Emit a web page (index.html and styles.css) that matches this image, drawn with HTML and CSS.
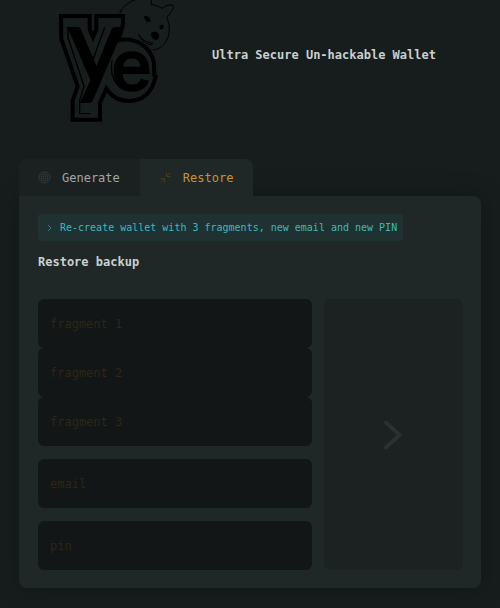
FILE: index.html
```html
<!DOCTYPE html>
<html lang="en">
<head>
<meta charset="utf-8">
<meta name="viewport" content="width=device-width, initial-scale=1">
<title>Ultra Secure Un-hackable Wallet</title>
<link rel="stylesheet" href="styles.css">
</head>
<body>
<header class="header">
  <svg class="logo" viewBox="0 0 405 390" role="img" aria-label="Ye">
    <g class="logo-line">
      <path d="M209 40C218 18 240 2 268-4C280-8 294-6 303-2L304 14C318 15 327 20 337 25C344 18 354 14 369 15C374 24 364 36 350 52C362 78 361 108 344 130C333 144 320 150 308 149"/>
      <path d="M266 104C277 121 290 127 307 129L306 134C288 135 273 121 266 104Z"/>
    </g>
    <path d="M283 48C292 46 301 53 302 63C295 71 284 65 283 48ZM328 78C334 71 341 72 342 79C340 88 334 89 329 86ZM304 98C315 92 327 98 328 108C328 117 321 121 316 119C306 117 302 108 304 98Z"/>
    <path class="logo-contour" d="M33 48H119V88L129 112L139 88V48H219V72L206 121C255 111 302 138 312 189L313 226L317 229C307 276 280 302 237 303C207 303 184 289 169 266L150 308V359H68V302L83 259L34 117Z"/>
    <path class="logo-inline" d="M54 80V112L102 259L89 300V341H120M164 82L130 177M186 180C176 248 212 277 255 262"/>
    <text><tspan class="logo-y" x="53" y="250">y</tspan><tspan class="logo-e" x="186" y="271">e</tspan></text>
  </svg>
  <h1 class="title">Ultra Secure Un-hackable Wallet</h1>
</header>
<main class="wallet">
  <nav class="tabs" aria-label="Wallet">
    <button class="tab" type="button">
      <svg class="tab-icon" viewBox="0 0 13 13" aria-hidden="true"><circle cx="6.5" cy="6.5" r="5.5"/><circle cx="6.5" cy="6.5" r="3.5"/><circle cx="6.5" cy="6.5" r="1.5"/></svg>
      Generate
    </button>
    <button class="tab tab-active" type="button" aria-current="page">
      <svg class="tab-icon" viewBox="0 0 13 13" aria-hidden="true"><path d="M1.5 11.5L5 8M1.5 7.5H5.5V11.5M11 2L7.500 5.500M7.500 1.500V5.500H11.500"/></svg>
      Restore
    </button>
  </nav>
  <section class="panel">
    <p class="note">
      <svg class="note-icon" viewBox="0 0 6 8" aria-hidden="true"><path d="M1 1L4 4L1 7"/></svg>
      Re-create wallet with 3 fragments, new email and new PIN
    </p>
    <h2 class="heading">Restore backup</h2>
    <form class="form">
      <div class="fields">
        <div class="fragments">
          <input class="field" type="text" aria-label="fragment 1" placeholder="fragment 1">
          <input class="field" type="text" aria-label="fragment 2" placeholder="fragment 2">
          <input class="field" type="text" aria-label="fragment 3" placeholder="fragment 3">
        </div>
        <input class="field" type="email" aria-label="email" placeholder="email">
        <input class="field" type="password" aria-label="pin" placeholder="pin">
      </div>
      <button class="submit" type="submit" aria-label="Restore wallet">
        <svg class="submit-icon" viewBox="0 0 18 30" aria-hidden="true"><path d="M2 2.5L15.5 15L2 27.5"/></svg>
      </button>
    </form>
  </section>
</main>
</body>
</html>
```
FILE: styles.css
```css
* {
  box-sizing: border-box;
}

body {
  margin: 0;
  background: #171d1c;
  color: #c8d0d0;
  font: 12px/18px "DejaVu Sans Mono", monospace;
}

.header {
  display: grid;
  grid-template-columns: 135px 1fr;
  column-gap: 27px;
  padding: 0 50px;
}

.logo {
  width: 135px;
  height: 130px;
}

.logo-line {
  fill: none;
  stroke: #000;
  stroke-width: 3;
}

.logo-contour {
  fill: #171d1c;
  stroke: #000;
  stroke-width: 12;
}

.logo-inline {
  fill: none;
  stroke: #000;
  stroke-width: 4;
}

.logo-y {
  font: 325px/1 Lato, sans-serif;
  stroke: #000;
  stroke-width: 6;
}

.logo-e {
  font: 212px/1 "Liberation Sans", sans-serif;
  stroke: #000;
  stroke-width: 8;
}

.title {
  margin: 46px 0 0;
  font-size: 12px;
  line-height: 18px;
  white-space: nowrap;
}

.wallet {
  padding: 29px 19px 19px;
}

.tabs {
  display: flex;
}

.tab {
  display: flex;
  align-items: center;
  gap: 11px;
  height: 37px;
  padding: 0 20px 0 19px;
  border: 0;
  border-radius: 8px 0 0 0;
  background: #1b2120;
  color: #a0a7a6;
  font: inherit;
}

.tab-active {
  border-radius: 0 8px 0 0;
  background: #202827;
  color: #c9942b;
}

.tab-icon {
  width: 13px;
  height: 13px;
  fill: none;
  stroke: #343c3b;
}

.tab-active .tab-icon {
  stroke: #443a22;
}

.panel {
  padding: 18px 18px 18px 19px;
  border-radius: 0 8px 8px 8px;
  background: #202827;
  box-shadow: 0 0 24px rgba(0, 0, 0, 0.25);
}

.note {
  display: flex;
  align-items: center;
  gap: 7px;
  width: fit-content;
  margin: 0;
  padding: 5px 6px 4px 9px;
  border-radius: 3px;
  background: #203131;
  color: #3cbabf;
  font-size: 10px;
}

.note-icon {
  width: 6px;
  height: 8px;
  fill: none;
  stroke: #2e7f80;
}

.heading {
  margin: 12px 0 28px;
  font-size: 12px;
  line-height: 18px;
}

.form {
  display: grid;
  grid-template-columns: 65fr 33fr;
  gap: 12px;
}

.fields {
  display: grid;
  gap: 13px;
}

.fragments {
  display: grid;
}

.field {
  width: 100%;
  height: 49px;
  padding: 0 12px;
  border: 0;
  border-radius: 6px;
  background: #121616;
  color: #c9942b;
  font: inherit;
}

.field::placeholder {
  color: #2f2616;
  opacity: 1;
}

.submit {
  display: grid;
  place-items: center;
  padding: 0;
  border: 0;
  border-radius: 6px;
  background: #1c2221;
}

.submit-icon {
  width: 18px;
  height: 30px;
  fill: none;
  stroke: #2a3130;
  stroke-width: 4;
  stroke-linecap: round;
  stroke-linejoin: round;
}
```
